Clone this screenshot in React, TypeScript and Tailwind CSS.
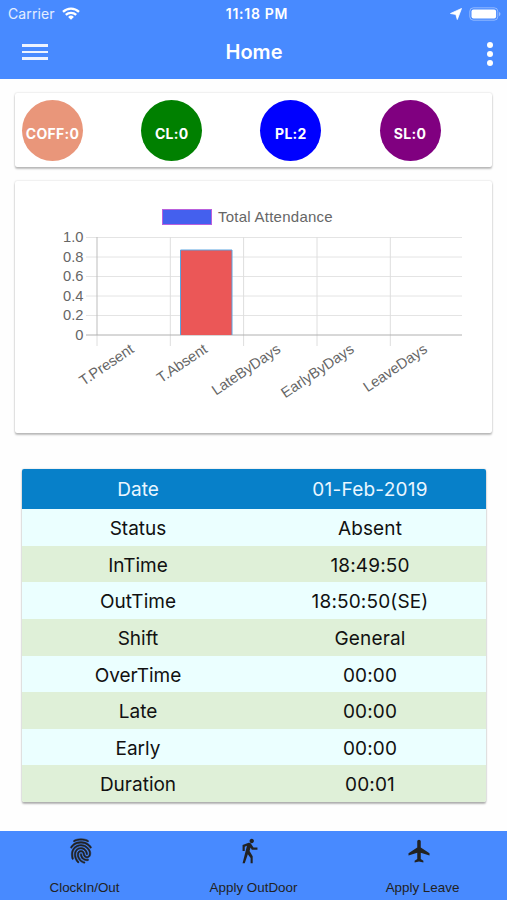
import React from "react"
import { IoMdAirplane, IoMdFingerPrint, IoMdWalk } from "react-icons/io"

const balances = [
    { label: "COFF:0", color: "bg-[#e9967a]" },
    { label: "CL:0", color: "bg-[#008000]" },
    { label: "PL:2", color: "bg-[#0000ff]" },
    { label: "SL:0", color: "bg-[#800080]" },
]

const rows = [
    { label: "Status", value: "Absent" },
    { label: "InTime", value: "18:49:50" },
    { label: "OutTime", value: "18:50:50(SE)" },
    { label: "Shift", value: "General" },
    { label: "OverTime", value: "00:00" },
    { label: "Late", value: "00:00" },
    { label: "Early", value: "00:00" },
    { label: "Duration", value: "00:01" },
]

const ticks = [
    { label: "1.0", y: 56.5 },
    { label: "0.8", y: 76 },
    { label: "0.6", y: 95.5 },
    { label: "0.4", y: 115 },
    { label: "0.2", y: 134.5 },
]

const categories = [
    { label: "T.Present", x: 82 },
    { label: "T.Absent", x: 155.3 },
    { label: "LateByDays", x: 228.6 },
    { label: "EarlyByDays", x: 302 },
    { label: "LeaveDays", x: 375.3 },
]

function StatusBar() {
    return (
        <div className="grid h-[27px] grid-cols-3 items-center px-2 text-[14px]">
            <div className="flex items-center gap-[7px] text-white/85">
                <span className="tracking-[0.1px]">Carrier</span>
                <svg width="18" height="13" viewBox="0 0 18 13" fill="none" stroke="white" strokeWidth="2.3">
                    <path d="M1 4.8a11.6 11.6 0 0 1 16 0" />
                    <path d="M3.8 7.9a7.6 7.6 0 0 1 10.4 0" />
                    <path d="M9 12.7 6.1 9.9a4.2 4.2 0 0 1 5.8 0z" fill="white" stroke="none" />
                </svg>
            </div>
            <div className="pl-[7px] text-center font-semibold tracking-[0.7px]">11:18 PM</div>
            <div className="flex items-center justify-end gap-[7px]">
                <svg width="12" height="12" viewBox="0 0 12 12" fill="white">
                    <path d="M11.5.5 7.3 11.5 5.8 6.4.5 5.5z" stroke="white" strokeWidth="0.8" strokeLinejoin="round" />
                </svg>
                <svg className="-mr-[3px]" width="33" height="14" viewBox="0 0 33 14">
                    <rect x="0.8" y="0.8" width="28" height="12.4" rx="3.6" fill="none" stroke="white" strokeOpacity="0.4" />
                    <rect x="2.5" y="2.5" width="24.6" height="9" rx="2" fill="white" />
                    <path d="M30.2 5v4.2c1.6-.7 1.6-3.5 0-4.2z" fill="white" fillOpacity="0.55" />
                </svg>
            </div>
        </div>
    )
}

function AttendanceChart() {
    return (
        <svg width="477" height="252" viewBox="0 0 477 252" fontFamily="'Liberation Sans', Arial, sans-serif" fontSize="14.7" fill="#666">
            {/* Legend */}
            <rect x="147.5" y="28.5" width="49" height="15" fill="#4460ee" stroke="#b960dc" />
            <text x="203" y="41" fontSize="15" letterSpacing="0.25">Total Attendance</text>

            {/* Grid */}
            {ticks.map((t) => (
                <g key={t.label}>
                    <path d={`M71 ${t.y}H447`} stroke="#e4e4e4" />
                    <text x="68.5" y={t.y + 4.8} textAnchor="end">{t.label}</text>
                </g>
            ))}
            <text x="68.5" y="158.8" textAnchor="end">0</text>
            <path d="M155.3 56V165M228.6 56V165M302 56V165M375.3 56V165M82 154V165" stroke="#dedede" />
            <path d="M82 56V154" stroke="#bdbdbd" />
            <path d="M71 154H447" stroke="#b0b0b0" />

            {/* Bar */}
            <rect x="165.5" y="69" width="51.5" height="85" fill="#eb5757" />
            <path d="M165.5 154V69H217V154" fill="none" stroke="#5aa4e0" />

            {categories.map((c) => (
                <text key={c.label} textAnchor="end" transform={`translate(${c.x + 38} 170.5) rotate(-34)`}>
                    {c.label}
                </text>
            ))}
        </svg>
    )
}

export default function App() {
    return (
        <div className="flex h-[900px] w-[507px] flex-col overflow-hidden bg-[#fefefe] font-['Inter',sans-serif]">

            {/* Header */}
            <header className="h-[79px] bg-[#488aff] text-white">
                <StatusBar />
                <div className="grid h-[50px] grid-cols-3 items-center pr-[14px] pl-[22px]">
                    <div className="flex w-[26px] flex-col gap-1">
                        <span className="h-[2.5px] bg-white/90" />
                        <span className="h-[2.5px] bg-white/90" />
                        <span className="h-[2.5px] bg-white/90" />
                    </div>
                    <h1 className="pr-[7px] text-center text-[20px] font-semibold">Home</h1>
                    <div className="mt-1 flex flex-col items-end gap-[3px]">
                        <span className="size-1.5 rounded-full bg-white" />
                        <span className="size-1.5 rounded-full bg-white" />
                        <span className="size-1.5 rounded-full bg-white" />
                    </div>
                </div>
            </header>

            {/* Leave balances */}
            <div className="mx-[15px] mt-[14px] flex h-[74px] items-center rounded-[2px] bg-white pl-[7px] shadow-[0_2px_2px_0_rgba(0,0,0,0.24),0_0_2px_0_rgba(0,0,0,0.2)]">
                {balances.map((b) => (
                    <div key={b.label} className="w-[119.2px] shrink-0">
                        <div className={`flex size-[61px] items-center justify-center rounded-full pt-[7px] text-[14px] font-bold tracking-[0.3px] whitespace-nowrap text-white ${b.color}`}>
                            {b.label}
                        </div>
                    </div>
                ))}
            </div>

            {/* Chart */}
            <div className="mx-[15px] mt-[14px] h-[252px] rounded-[2px] bg-white shadow-[0_2px_2px_0_rgba(0,0,0,0.24),0_0_2px_0_rgba(0,0,0,0.2)]">
                <AttendanceChart />
            </div>

            {/* Day details */}
            <div className="mr-[21px] ml-[22px] mt-[36px] h-[333px] overflow-hidden rounded-[2px] text-center text-[19px] text-[#111] shadow-[0_2px_2px_0_rgba(0,0,0,0.28),0_0_2px_0_rgba(0,0,0,0.2)]">
                <div className="grid h-10 grid-cols-2 items-center bg-[#0780c9] pt-[2px] text-[#e9f6ff]">
                    <div>Date</div>
                    <div className="tracking-[0.25px]">01-Feb-2019</div>
                </div>
                {rows.map((r) => (
                    <div key={r.label} className="grid h-[36.63px] grid-cols-2 items-center pt-1 odd:bg-[#dff0d8] even:bg-[#ebffff]">
                        <div>{r.label}</div>
                        <div className="tracking-[0.15px]">{r.value}</div>
                    </div>
                ))}
            </div>

            {/* Footer */}
            <footer className="mt-auto grid h-[69px] grid-cols-3 bg-[#488aff] font-['Liberation_Sans',Arial,sans-serif] text-[13.4px] text-[#222]">
                <div className="flex flex-col items-center pt-[6px]">
                    <IoMdFingerPrint className="mr-2" size={28} stroke="#222" strokeWidth={9} />
                    <span className="mt-[13px]">ClockIn/Out</span>
                </div>
                <div className="flex flex-col items-center pt-[6px]">
                    <IoMdWalk className="mr-2" size={28} />
                    <span className="mt-[13px]">Apply OutDoor</span>
                </div>
                <div className="flex flex-col items-center pt-[6px]">
                    <IoMdAirplane className="mr-2" size={28} />
                    <span className="mt-[13px]">Apply Leave</span>
                </div>
            </footer>
        </div>
    )
}
